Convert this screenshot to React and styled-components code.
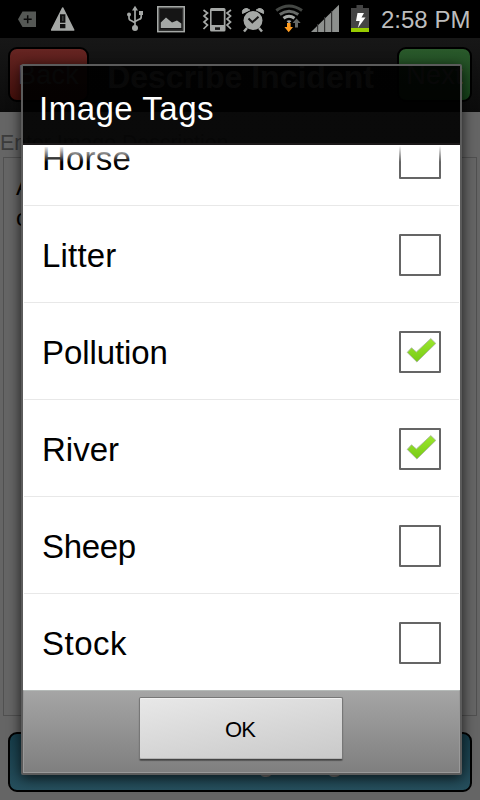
import React from "react";
import styled, { createGlobalStyle } from "styled-components";

const Global = createGlobalStyle`
  *, *::before, *::after { box-sizing: border-box; }
  body { margin: 0; background: #666; font-family: "Liberation Sans", Arial, sans-serif; }
`;

const Screen = styled.div`
  position: relative;
  width: 480px;
  height: 800px;
  overflow: hidden;
  background: #656565;
  display: flex;
  flex-direction: column;
`;

const StatusBar = styled.header`
  height: 38px;
  flex: none;
  display: flex;
  align-items: center;
  background: #000;
`;

const Icon = styled.svg`
  display: block;
  flex: none;
  height: 38px;
  margin-left: ${(p) => p.$gap}px;
`;

const Clock = styled.time`
  margin-left: 12px;
  padding-top: 2px;
  color: #bdbdbd;
  font-size: 24px;
  line-height: 36px;
  white-space: nowrap;
`;

const NavBar = styled.div`
  height: 74px;
  flex: none;
  padding: 9px 8px 0;
  display: flex;
  justify-content: space-between;
  background: linear-gradient(#171717, #0b0b0b);
`;

const NavButton = styled.button`
  width: ${(p) => p.$width}px;
  height: 55px;
  padding: 0;
  border: 2px solid #000;
  border-radius: 9px;
  background: ${(p) => p.$fill};
  color: #666;
  font: 27px/52px "Liberation Sans", Arial, sans-serif;
  letter-spacing: 0.2px;
`;

const NavTitle = styled.h1`
  margin: 0 5px 0 0;
  color: #777;
  font-size: 32px;
  line-height: 60px;
  white-space: nowrap;
`;

const Form = styled.main`
  flex: 1;
  display: flex;
  flex-direction: column;
  padding: 18px 3px 8px 3px;
`;

const FieldLabel = styled.label`
  margin-left: -3px;
  height: 27px;
  color: #3c3c3c;
  font-size: 21.3px;
  line-height: 27px;
`;

const TextBox = styled.div`
  height: 559px;
  padding: 13px 12px;
  border: 1px solid #505050;
  color: #000;
  font-size: 24px;
  line-height: 31px;
`;

const TagsButton = styled.button`
  margin: 16px 5px 0;
  height: 60px;
  padding: 0 0 0 2px;
  border: 2px solid #000;
  border-radius: 9px;
  background: linear-gradient(#163c49, #264f5d);
  color: #777;
  font: bold 27px/56px "Liberation Sans", Arial, sans-serif;
`;

const Dialog = styled.section`
  position: absolute;
  left: 21px;
  top: 64px;
  width: 441px;
  height: 711px;
  border: 2px solid #5b5b5b;
  border-radius: 2px;
  box-shadow: 0 3px 13px rgba(0, 0, 0, 0.75);
  display: flex;
  flex-direction: column;
`;

const DialogTitle = styled.h2`
  margin: 0;
  height: 79px;
  flex: none;
  padding: 0 16px;
  border-bottom: 2px solid #1b1819;
  background: linear-gradient(rgba(0, 0, 0, 0.93) 46px, rgba(3, 3, 3, 0.93) 46px);
  color: #fff;
  font-size: 33px;
  font-weight: 400;
  line-height: 85px;
  letter-spacing: 0.5px;
`;

const TagList = styled.div`
  position: relative;
  height: 545px;
  overflow: hidden;
  display: flex;
  flex-direction: column;
  justify-content: flex-end;
  background: #fff;
`;

const TopFade = styled.div`
  position: absolute;
  inset: 0 0 auto;
  height: 17px;
  background: linear-gradient(#fff 5%, rgba(255, 255, 255, 0));
`;

const TagRow = styled.div`
  height: ${(p) => (p.$last ? 96 : 97)}px;
  flex: none;
  margin: 0 1px;
  padding: 0 18px;
  display: flex;
  align-items: center;
  justify-content: space-between;
  border-bottom: ${(p) => (p.$last ? "none" : "1px solid #e8e8e8")};
  color: #000;
  font-size: 33px;
  line-height: 40px;
  letter-spacing: ${(p) => p.$tracking || 0}px;
`;

const TagName = styled.span`
  padding-top: 4px;
`;

const Box = styled.span`
  width: 42px;
  height: 42px;
  margin-top: 2px;
  border: 2px solid #656565;
  border-radius: 1px;
`;

const CheckArt = styled.svg`
  display: block;
  width: 38px;
  height: 38px;
`;

const Footer = styled.footer`
  flex: 1;
  display: flex;
  justify-content: center;
  align-items: flex-start;
  padding-top: 6px;
  border: 1px solid #999;
  border-top-color: #b5bab8;
  background: linear-gradient(#a5a5a5, #7f7f7f);
`;

const OkButton = styled.button`
  width: 204px;
  height: 63px;
  margin-left: -2px;
  padding: 0 1px 0 0;
  border: 1px solid #777;
  border-bottom: 1px solid #444;
  border-radius: 2px;
  background: linear-gradient(170deg, #e8e8e8, #c9c9c9);
  box-shadow: inset 0 1px #f0f0f0, inset 0 -1px #b2b2b2, 0 1px 1px rgba(0, 0, 0, 0.35);
  color: #000;
  font: 22px/63px "Liberation Sans", Arial, sans-serif;
  letter-spacing: -0.8px;
`;

const G = "#a5a8a6";

const StatusIcons = () => (
  <>
    <Icon $gap={18} width="18" viewBox="18 0 18 38">
      <path d="M18 19.2 22.5 11.5H36V27H22.5Z" fill="#555855" />
      <path d="M27.7 15.2v8M23.7 19.2h8" stroke="#0a0a0a" strokeWidth="1.5" />
    </Icon>
    <Icon $gap={15} width="24" viewBox="51 0 24 38">
      <path d="M62.7 8 73.7 30H51.7Z" fill={G} stroke={G} strokeWidth="1.6" strokeLinejoin="round" />
      <path d="M60 14.3h5.4v8.4H60zM60 24h5.4v4.3H60z" fill="#101010" />
      <path d="M62 16h1.6v5H62z" fill="#383b39" />
    </Icon>
    <Icon $gap={51} width="18" viewBox="126 0 18 38">
      <path d="M135 8v20M129 15v3q0 2 2.5 2.8l3.5 2M141.2 14v3q0 2-2.5 2.5L135 21.5" fill="none" stroke={G} strokeWidth="1.7" />
      <path d="M135 5.7 138 10.5H132ZM139 11h4v4h-4z" fill={G} />
      <circle cx="129" cy="14.5" r="2" fill={G} />
      <circle cx="135" cy="28" r="3" fill={G} />
    </Icon>
    <Icon $gap={12} width="30" viewBox="156 0 30 38">
      <rect x="157.8" y="6.8" width="26.4" height="24.8" fill="#151515" stroke={G} strokeWidth="1.6" />
      <rect x="159.5" y="8.5" width="23" height="21.4" fill="none" stroke="#303030" />
      <path d="M160.8 28V22.5L166 17.5 172 22.5 177 20.5 181.3 23.5V28Z" fill={G} />
    </Icon>
    <Icon $gap={16} width="30" viewBox="202 0 30 38">
      <rect x="210" y="8" width="15.5" height="23.6" rx="1.5" fill={G} />
      <path d="M211.6 11h12.2v14h-12.2z" fill="#060606" />
      <path d="M215 27.3h5v2.6h-5z" fill="#161616" />
      <path d="M203.5 10l4 3-3.5 3 3.5 3-3.5 3 3.5 3-4 4M231 10l-4 3 3.5 3-3.5 3 3.5 3-3.5 3 4 4" fill="none" stroke={G} strokeWidth="1.7" />
    </Icon>
    <Icon $gap={9} width="24" viewBox="241 0 24 38">
      <path d="M242.5 13.5Q241.5 8.5 247 8.5L249.8 10ZM263.5 13.5Q264.5 8.5 259 8.5L256.2 10Z" fill={G} stroke={G} />
      <circle cx="253" cy="20.5" r="9.5" fill={G} />
      <path d="M247 28l-3 3.5M259 28l3 3.5" stroke={G} strokeWidth="2.5" />
      <path d="M248.5 18.5 252.3 22.3 258.5 16.8" fill="none" stroke="#151515" strokeWidth="2" />
    </Icon>
    <Icon $gap={10} width="29" viewBox="275 0 29 38">
      <path d="M276.3 10.5Q289 1.5 302 10.5" fill="none" stroke="#444744" strokeWidth="3" />
      <path d="M279.8 14.5Q289 8 298.3 14.5" fill="none" stroke="#666967" strokeWidth="3" />
      <path d="M283.5 18.2Q289 14.3 294.5 18.2" fill="none" stroke={G} strokeWidth="3" />
      <path d="M286.5 21Q289 19.3 291.5 21L289 23.5Z" fill={G} />
      <path d="M287 23h3.6v4h2.4L288.7 32.2 284.4 27H287Z" fill="#ff9c20" />
      <path d="M295 27.5V23h-2.5L296.5 18.5 300.7 23H298v4.5Z" fill="#666967" />
    </Icon>
    <Icon $gap={7} width="29" viewBox="311 0 29 38">
      <path d="M311 32 339 4.7V32Z" fill="#8d908e" />
      <path d="M317.6 24v8M324.6 17v15M331.6 11v21" stroke="#333" strokeWidth="1.2" />
    </Icon>
    <Icon $gap={11} width="18" viewBox="351 0 18 38">
      <path d="M351 8h5.5V5h6.5v3h6v20h-18z" fill="#444" />
      <path d="M351 28h18v4h-18z" fill="#98cc00" />
      <path d="M357.5 13h6.5l-2.5 4.5h4L357.8 28 359.7 21H356Z" fill="#fff" />
    </Icon>
  </>
);

const Check = () => (
  <CheckArt viewBox="0 0 38 38">
    <defs>
      <linearGradient id="tick" x1="0" y1="0" x2="0" y2="1">
        <stop offset="0" stopColor="#9be62e" />
        <stop offset="1" stopColor="#78cb16" />
      </linearGradient>
    </defs>
    <path
      d="M6.2 19.4 10.5 14.8 15.4 19 29.8 5.6 34.8 10.4 15.9 29Z"
      fill="url(#tick)"
      stroke="#a9b89c"
      strokeWidth="0.9"
      strokeLinejoin="round"
    />
  </CheckArt>
);

const tags = [
  { name: "Horse", tracking: 0.2 },
  { name: "Litter", tracking: 0.2 },
  { name: "Pollution", checked: true, tracking: -0.1 },
  { name: "River", checked: true },
  { name: "Sheep", tracking: -0.3 },
  { name: "Stock", tracking: 0.5 },
];

export default function App() {
  return (
    <Screen>
      <Global />
      <StatusBar>
        <StatusIcons />
        <Clock>2:58 PM</Clock>
      </StatusBar>
      <NavBar>
        <NavButton $width={81} $fill="linear-gradient(#662522, #420f0b)">Back</NavButton>
        <NavTitle>Describe Incident</NavTitle>
        <NavButton $width={75} $fill="linear-gradient(#2a592b, #15421a)">Next</NavButton>
      </NavBar>
      <Form>
        <FieldLabel>Enter Image Description</FieldLabel>
        <TextBox>
          A<br />c
        </TextBox>
        <TagsButton>Select Image Tags</TagsButton>
      </Form>
      <Dialog>
        <DialogTitle>Image Tags</DialogTitle>
        <TagList>
          {tags.map((t, i) => (
            <TagRow key={t.name} $last={i === tags.length - 1} $tracking={t.tracking}>
              <TagName>{t.name}</TagName>
              <Box>{t.checked && <Check />}</Box>
            </TagRow>
          ))}
          <TopFade />
        </TagList>
        <Footer>
          <OkButton>OK</OkButton>
        </Footer>
      </Dialog>
    </Screen>
  );
}
